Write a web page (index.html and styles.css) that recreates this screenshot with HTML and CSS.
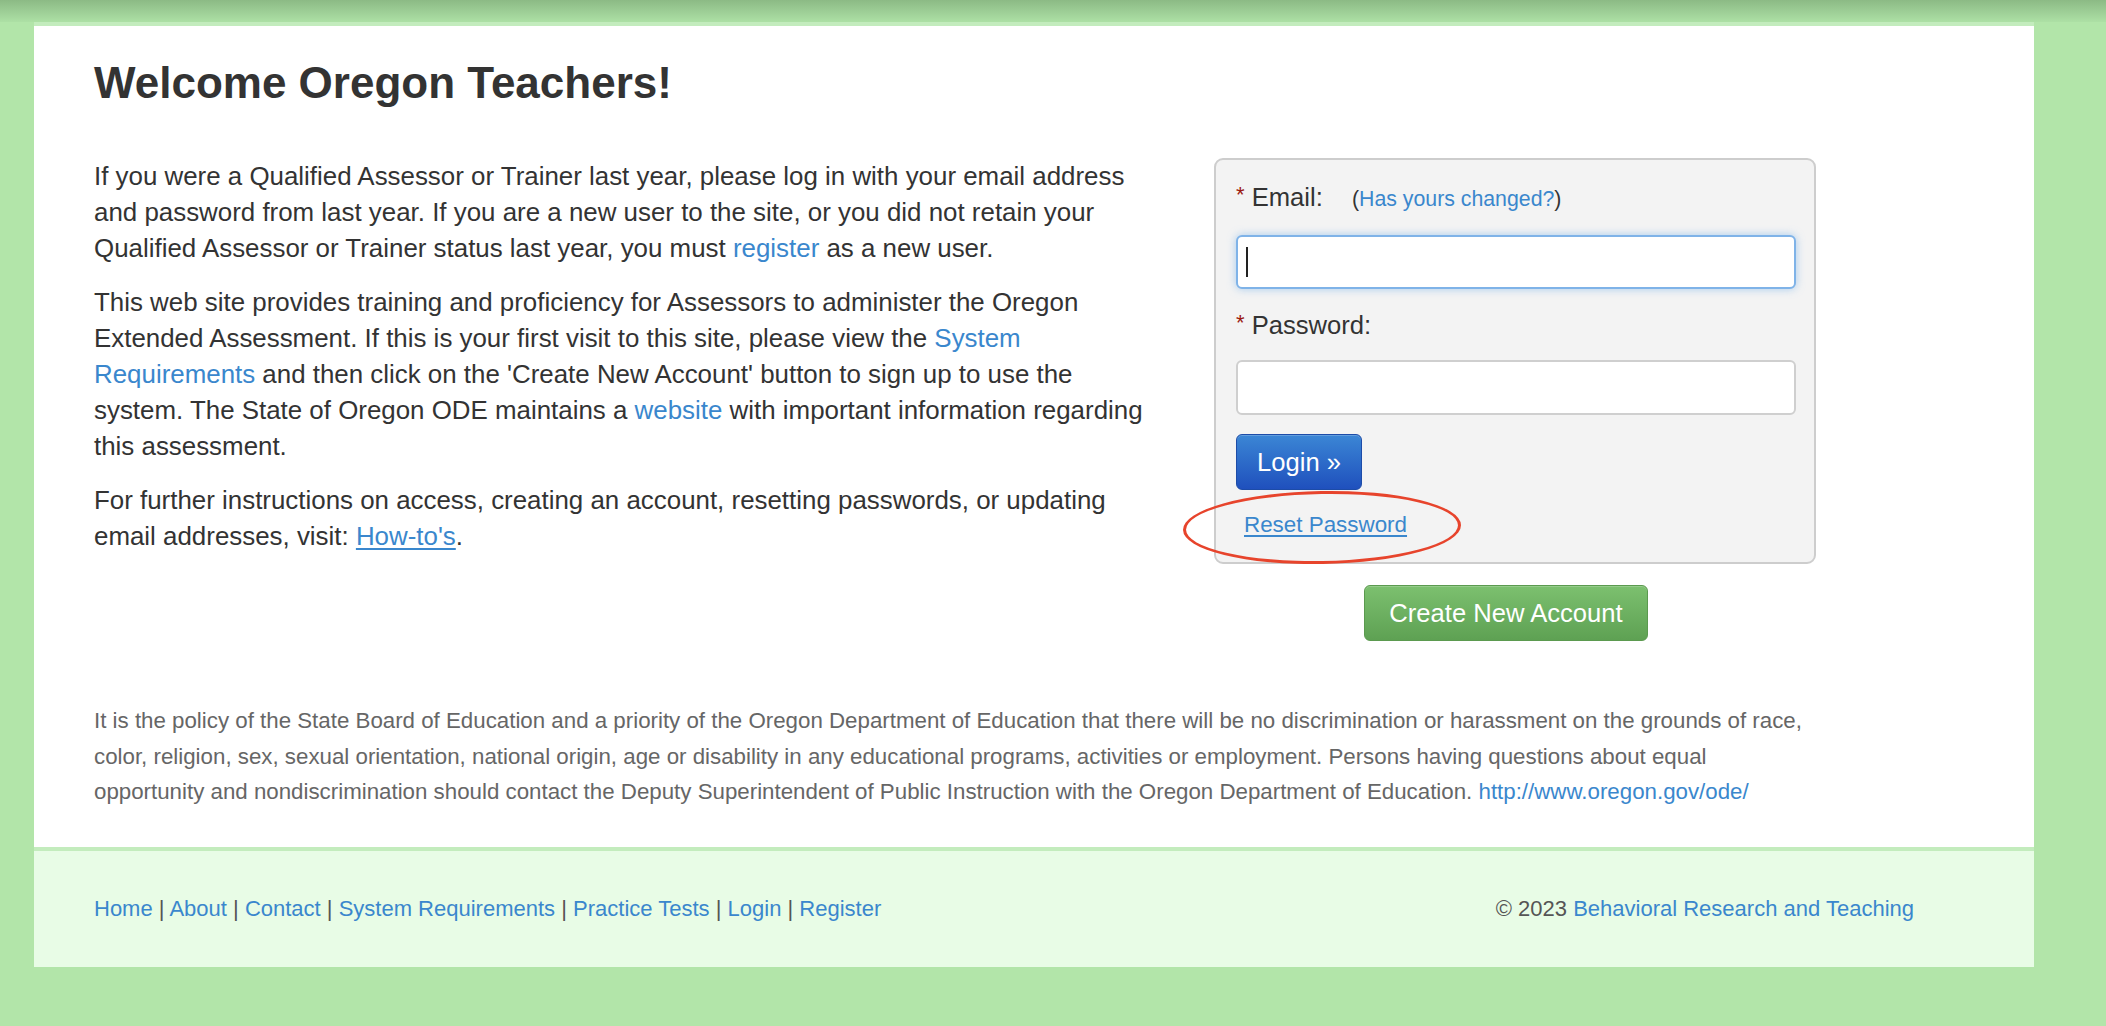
FILE: index.html
```html
<!DOCTYPE html>
<html lang="en">
<head>
<meta charset="utf-8">
<title>Welcome Oregon Teachers!</title>
<link rel="stylesheet" href="styles.css">
</head>
<body>
<div class="topbar"></div>
<div class="page">
  <div class="content">
    <h1 class="title">Welcome Oregon Teachers!</h1>
    <div class="row">
      <div class="intro">
        <p>If you were a Qualified Assessor or Trainer last year, please log in with your email address and password from last year. If you are a new user to the site, or you did not retain your Qualified Assessor or Trainer status last year, you must <a href="#">register</a> as a new user.</p>
        <p>This web site provides training and proficiency for Assessors to administer the Oregon Extended Assessment. If this is your first visit to this site, please view the <a href="#">System Requirements</a> and then click on the 'Create New Account' button to sign up to use the system. The State of Oregon ODE maintains a <a href="#">website</a> with important information regarding this assessment.</p>
        <p>For further instructions on access, creating an account, resetting passwords, or updating email addresses, visit: <a href="#" class="ul">How-to's</a>.</p>
      </div>
      <div class="side">
        <form class="login">
          <div class="label"><span class="req">*</span> Email: <span class="hint">(<a href="#">Has yours changed?</a>)</span></div>
          <div class="field focused"><span class="caret"></span></div>
          <div class="label"><span class="req">*</span> Password:</div>
          <div class="field"></div>
          <button type="button" class="btn-login">Login »</button>
          <div class="reset"><a href="#" class="ul">Reset Password</a></div>
          <div class="circle"></div>
        </form>
        <button type="button" class="btn-create">Create New Account</button>
      </div>
    </div>
    <p class="policy">It is the policy of the State Board of Education and a priority of the Oregon Department of Education that there will be no discrimination or harassment on the grounds of race,<br>color, religion, sex, sexual orientation, national origin, age or disability in any educational programs, activities or employment. Persons having questions about equal<br>opportunity and nondiscrimination should contact the Deputy Superintendent of Public Instruction with the Oregon Department of Education. <a href="#">http://www.oregon.gov/ode/</a></p>
  </div>
  <div class="footer">
    <div class="links"><a href="#">Home</a> | <a href="#">About</a> | <a href="#">Contact</a> | <a href="#">System Requirements</a> | <a href="#">Practice Tests</a> | <a href="#">Login</a> | <a href="#">Register</a></div>
    <div class="copy">© 2023 <a href="#">Behavioral Research and Teaching</a></div>
  </div>
</div>
</body>
</html>
```
FILE: styles.css
```css
html, body {
  margin: 0;
  padding: 0;
}
body {
  background: #b2e5a9;
  font-family: "Liberation Sans", Arial, Helvetica, sans-serif;
  color: #333;
  min-height: 1026px;
}
a {
  color: #3a87cd;
  text-decoration: none;
}
a.ul {
  text-decoration: underline;
  text-underline-offset: 3px;
}
.topbar {
  height: 22px;
  background: linear-gradient(#8cba85, #ade0a5);
}
.page {
  margin-left: 34px;
  width: 2000px;
  border-top: 4px solid #c3ecbd;
  background: #fff;
}
.content {
  padding: 0 120px 0 60px;
  overflow: hidden;
}
.title {
  margin: 33px 0 0;
  font-size: 44px;
  line-height: 48px;
  font-weight: bold;
  color: #333;
}
.row {
  display: flex;
  margin-top: 51px;
}
.intro {
  width: 1072px;
  font-size: 25.9px;
  line-height: 36px;
}
.intro p {
  margin: 0 0 18px;
}
.side {
  margin-left: 48px;
  width: 602px;
  display: flex;
  flex-direction: column;
}
.login {
  position: relative;
  box-sizing: border-box;
  width: 602px;
  background: #f3f3f3;
  border: 2px solid #cdcdcd;
  border-radius: 9px;
  padding: 19px 18px 19px 20px;
  margin: 0;
}
.label {
  height: 36px;
  font-size: 25.6px;
  line-height: 36px;
  color: #333;
  white-space: nowrap;
}
.req {
  color: #9c1a12;
  font-size: 22px;
  line-height: 1;
  vertical-align: 4px;
}
.hint {
  font-size: 21.3px;
  line-height: 1;
  margin-left: 22px;
}
.hint a {
  color: #3a87cd;
}
.field {
  box-sizing: border-box;
  height: 55px;
  background: #fff;
  border: 2px solid #cfcfcf;
  border-radius: 6px;
  margin: 17px 0 19px;
  display: flex;
  align-items: center;
  padding-left: 8px;
}
.field.focused {
  border-color: #7fb3e8;
  box-shadow: 0 0 8px rgba(102, 170, 233, 0.55);
  height: 54px;
  margin: 20px 0 18px;
}
.caret {
  width: 2px;
  height: 30px;
  background: #222;
}
.btn-login {
  display: block;
  margin-top: 0;
  width: 126px;
  height: 56px;
  border: 1px solid #1d4ca8;
  border-radius: 6px;
  background: linear-gradient(#3b86d5, #1f50bd);
  color: #fff;
  font-family: "Liberation Sans", Arial, sans-serif;
  font-size: 25.6px;
  padding: 0;
  box-shadow: inset 0 1px 0 rgba(255,255,255,0.2);
}
.reset {
  margin-top: 17px;
  padding-left: 8px;
  font-size: 22.4px;
  line-height: 36px;
}
.circle {
  position: absolute;
  left: -33px;
  top: 331px;
  width: 278px;
  height: 73px;
  border: 3px solid #e7442c;
  border-radius: 50%;
  box-sizing: border-box;
  transform: rotate(-1deg);
}
.btn-create {
  align-self: flex-start;
  margin-top: 21px;
  margin-left: 150px;
  width: 284px;
  height: 56px;
  border: 1px solid #5b9a4f;
  border-radius: 6px;
  background: linear-gradient(#7cc06f, #5ea153);
  color: #fff;
  font-family: "Liberation Sans", Arial, sans-serif;
  font-size: 25.6px;
  padding: 0;
  box-shadow: inset 0 1px 0 rgba(255,255,255,0.2);
}
.policy {
  margin: 62px 0 0;
  padding-bottom: 37px;
  font-size: 22.3px;
  line-height: 35.5px;
  color: #666;
}
.footer {
  border-top: 4px solid #c3ecbd;
  background: #e8fce6;
  display: flex;
  justify-content: space-between;
  padding: 40px 120px 40px 60px;
  font-size: 22px;
  line-height: 36px;
  color: #555;
}
```
